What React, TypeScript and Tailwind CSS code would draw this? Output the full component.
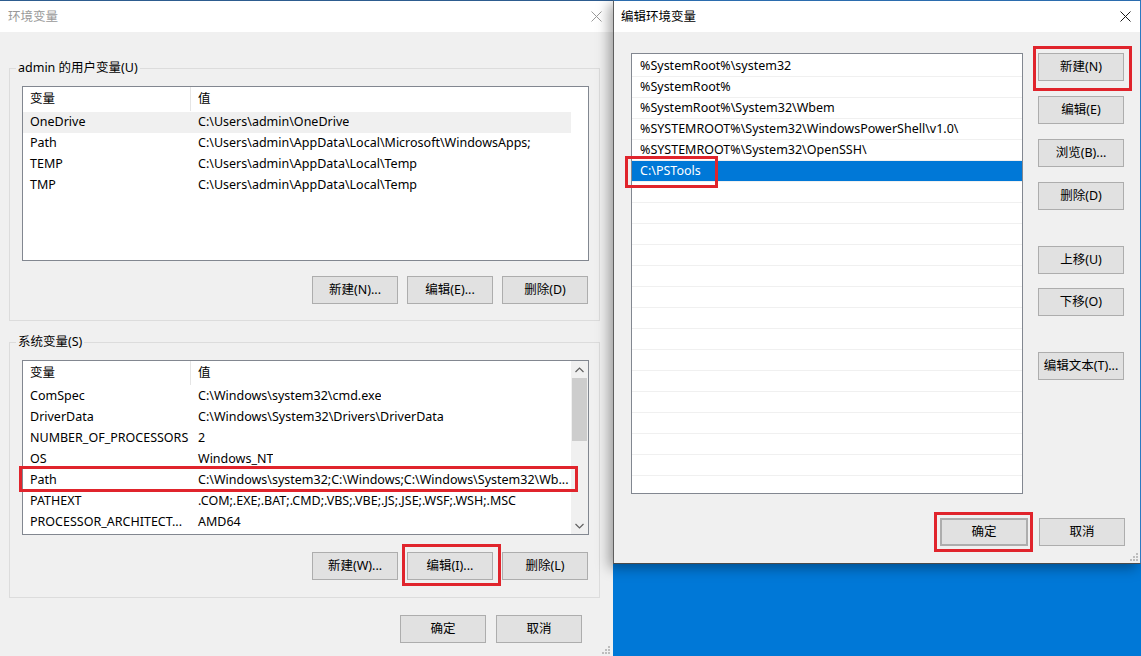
import React from "react";

const FONT = "'Segoe UI','Noto Sans','Noto Sans CJK SC',sans-serif";

function CloseX({ color }: { color: string }) {
  return (
    <svg width="11" height="11" viewBox="0 0 11 11">
      <path d="M0.5 0.5 L10.5 10.5 M10.5 0.5 L0.5 10.5" stroke={color} strokeWidth="1" fill="none" />
    </svg>
  );
}

function Grip() {
  return (
    <svg width="8" height="8" viewBox="0 0 8 8">
      <rect x="6" y="0" width="2" height="2" fill="#bdbdbd" />
      <rect x="3" y="3" width="2" height="2" fill="#bdbdbd" />
      <rect x="6" y="3" width="2" height="2" fill="#bdbdbd" />
      <rect x="0" y="6" width="2" height="2" fill="#bdbdbd" />
      <rect x="3" y="6" width="2" height="2" fill="#bdbdbd" />
      <rect x="6" y="6" width="2" height="2" fill="#bdbdbd" />
    </svg>
  );
}

function Btn({ label, className = "" }: { label: string; className?: string }) {
  return (
    <div
      className={
        "flex h-[28px] w-[86px] shrink-0 items-center justify-center border border-[#adadad] bg-[#e1e1e1] text-[12.5px] text-black " +
        className
      }
    >
      {label}
    </div>
  );
}

function RedBox({ className }: { className: string }) {
  return <div className={"pointer-events-none absolute border-[3px] border-[#e0242c] " + className} />;
}

type Row = [string, string];

function VarList({ rows, hoverIdx, scroll }: { rows: Row[]; hoverIdx?: number; scroll?: boolean }) {
  return (
    <div className="relative flex h-[175px] w-[567px] border border-[#828790] bg-white">
      <div className="flex w-[548px] flex-col">
        <div className="flex h-[25px] items-center pb-[1px] text-[12.5px] text-black">
          <div className="flex h-full w-[168px] items-center border-r border-[#e5e5e5] pl-[7px]">变量</div>
          <div className="pl-[7px]">值</div>
        </div>
        {rows.map((r, i) => (
          <div
            key={i}
            className={
              "flex h-[21px] items-center whitespace-nowrap text-[12.5px] text-black " +
              (i === hoverIdx ? "bg-[#f0f0f0]" : "")
            }
          >
            <div className="w-[168px] overflow-hidden pl-[7px]">{r[0]}</div>
            <div className="overflow-hidden pl-[7px]">{r[1]}</div>
          </div>
        ))}
      </div>
      {scroll && (
        <div className="ml-auto flex w-[17px] flex-col items-center bg-[#f0f0f0]">
          <div className="flex h-[17px] w-full items-center justify-center">
            <svg width="9" height="6" viewBox="0 0 9 6">
              <path d="M0.5 5 L4.5 1 L8.5 5" stroke="#606060" strokeWidth="1.2" fill="none" />
            </svg>
          </div>
          <div className="h-[63px] w-[15px] bg-[#cdcdcd]" />
          <div className="flex-1" />
          <div className="flex h-[17px] w-full items-center justify-center">
            <svg width="9" height="6" viewBox="0 0 9 6">
              <path d="M0.5 1 L4.5 5 L8.5 1" stroke="#606060" strokeWidth="1.2" fill="none" />
            </svg>
          </div>
        </div>
      )}
    </div>
  );
}

const userRows: Row[] = [
  ["OneDrive", "C:\\Users\\admin\\OneDrive"],
  ["Path", "C:\\Users\\admin\\AppData\\Local\\Microsoft\\WindowsApps;"],
  ["TEMP", "C:\\Users\\admin\\AppData\\Local\\Temp"],
  ["TMP", "C:\\Users\\admin\\AppData\\Local\\Temp"],
];

const sysRows: Row[] = [
  ["ComSpec", "C:\\Windows\\system32\\cmd.exe"],
  ["DriverData", "C:\\Windows\\System32\\Drivers\\DriverData"],
  ["NUMBER_OF_PROCESSORS", "2"],
  ["OS", "Windows_NT"],
  ["Path", "C:\\Windows\\system32;C:\\Windows;C:\\Windows\\System32\\Wb..."],
  ["PATHEXT", ".COM;.EXE;.BAT;.CMD;.VBS;.VBE;.JS;.JSE;.WSF;.WSH;.MSC"],
  ["PROCESSOR_ARCHITECT...", "AMD64"],
];

const pathItems = [
  "%SystemRoot%\\system32",
  "%SystemRoot%",
  "%SystemRoot%\\System32\\Wbem",
  "%SYSTEMROOT%\\System32\\WindowsPowerShell\\v1.0\\",
  "%SYSTEMROOT%\\System32\\OpenSSH\\",
  "C:\\PSTools",
];

export default function App() {
  const emptyRows = Array.from({ length: 15 });
  return (
    <div className="relative h-[656px] w-[1141px] overflow-hidden bg-[#0078d7]" style={{ fontFamily: FONT }}>
      {/* Left window: 环境变量 (inactive) */}
      <div className="absolute left-0 top-0 flex h-[656px] w-[613px] flex-col border-t border-[#2d5c8f] bg-[#f0f0f0]">
        <div className="flex h-[31px] shrink-0 items-center justify-between bg-white">
          <div className="pl-[8px] pt-[1px] text-[12.5px] text-[#999999]">环境变量</div>
          <div className="mr-[4px] flex h-full w-[26px] items-center justify-center">
            <CloseX color="#9a9a9a" />
          </div>
        </div>

        <fieldset className="ml-[9px] mt-[28px] w-[591px] border border-[#dcdcdc] pb-[16px] pl-[12px] pr-[10px] pt-[10px]">
          <legend className="ml-[-6px] px-[2px] text-[12.5px] leading-[16px] text-black">admin 的用户变量(U)</legend>
          <VarList rows={userRows} hoverIdx={0} />
          <div className="mt-[15px] flex w-[567px] justify-end gap-[9px] pr-[1px]">
            <Btn label="新建(N)..." />
            <Btn label="编辑(E)..." />
            <Btn label="删除(D)" />
          </div>
        </fieldset>

        <fieldset className="relative ml-[9px] mt-[13px] w-[591px] border border-[#dcdcdc] pb-[17px] pl-[12px] pr-[10px] pt-[10px]">
          <legend className="ml-[-6px] px-[2px] text-[12.5px] leading-[16px] text-black">系统变量(S)</legend>
          <VarList rows={sysRows} scroll />
          <div className="mt-[17px] flex w-[567px] justify-end gap-[9px] pr-[1px]">
            <Btn label="新建(W)..." />
            <Btn label="编辑(I)..." />
            <Btn label="删除(L)" />
          </div>
        </fieldset>

        <div className="mt-[17px] flex w-[582px] justify-end gap-[10px]">
          <Btn label="确定" />
          <Btn label="取消" />
        </div>
        <div className="absolute bottom-[2px] left-[602px]">
          <Grip />
        </div>
      </div>

      {/* red boxes on left window */}
      <RedBox className="left-[19px] top-[466px] h-[26px] w-[559px]" />
      <RedBox className="left-[402px] top-[544px] h-[42px] w-[99px]" />

      {/* Right window: 编辑环境变量 (active) */}
      <div className="absolute left-[613px] top-0 flex h-[564px] w-[528px] flex-col border border-l-[#5e5e5e] border-t-[#2b6cae] border-r-[#2b79c2] border-b-[#4a4a4a] bg-[#f0f0f0] shadow-[-4px_4px_12px_rgba(0,0,0,0.35)]">
        <div className="flex h-[31px] shrink-0 items-center justify-between bg-white">
          <div className="pl-[7px] pt-[1px] text-[12.5px] text-black">编辑环境变量</div>
          <div className="flex h-full w-[30px] items-center justify-center">
            <CloseX color="#1a1a1a" />
          </div>
        </div>
        <div className="flex pl-[17px] pt-[21px]">
          <div className="flex h-[441px] w-[392px] flex-col overflow-hidden border border-[#828790] bg-white pt-[2px]">
            {pathItems.map((p, i) => (
              <div
                key={i}
                className={
                  "flex h-[21px] shrink-0 items-center border-b border-[#f0f0f0] pl-[8px] text-[12.5px] " +
                  (i === 5 ? "bg-[#0078d7] text-white" : "text-black")
                }
              >
                {p}
              </div>
            ))}
            {emptyRows.map((_, i) => (
              <div key={i} className="h-[21px] shrink-0 border-b border-[#f0f0f0]" />
            ))}
          </div>
          <div className="ml-[15px] flex flex-col">
            <Btn label="新建(N)" />
            <Btn label="编辑(E)" className="mt-[15px]" />
            <Btn label="浏览(B)..." className="mt-[15px]" />
            <Btn label="删除(D)" className="mt-[15px]" />
            <Btn label="上移(U)" className="mt-[36px]" />
            <Btn label="下移(O)" className="mt-[14px]" />
            <Btn label="编辑文本(T)..." className="mt-[36px]" />
          </div>
        </div>
        <div className="mt-[24px] flex justify-end gap-[11px] pr-[15px]">
          <Btn label="确定" className="w-[88px] border-2 border-[#0078d7]" />
          <Btn label="取消" />
        </div>
        <div className="absolute bottom-[2px] right-[2px]">
          <Grip />
        </div>
      </div>

      {/* red boxes on right window */}
      <RedBox className="left-[1033px] top-[46px] h-[45px] w-[99px]" />
      <RedBox className="left-[625px] top-[156px] h-[32px] w-[93px]" />
      <RedBox className="left-[934px] top-[512px] h-[40px] w-[99px]" />
    </div>
  );
}
